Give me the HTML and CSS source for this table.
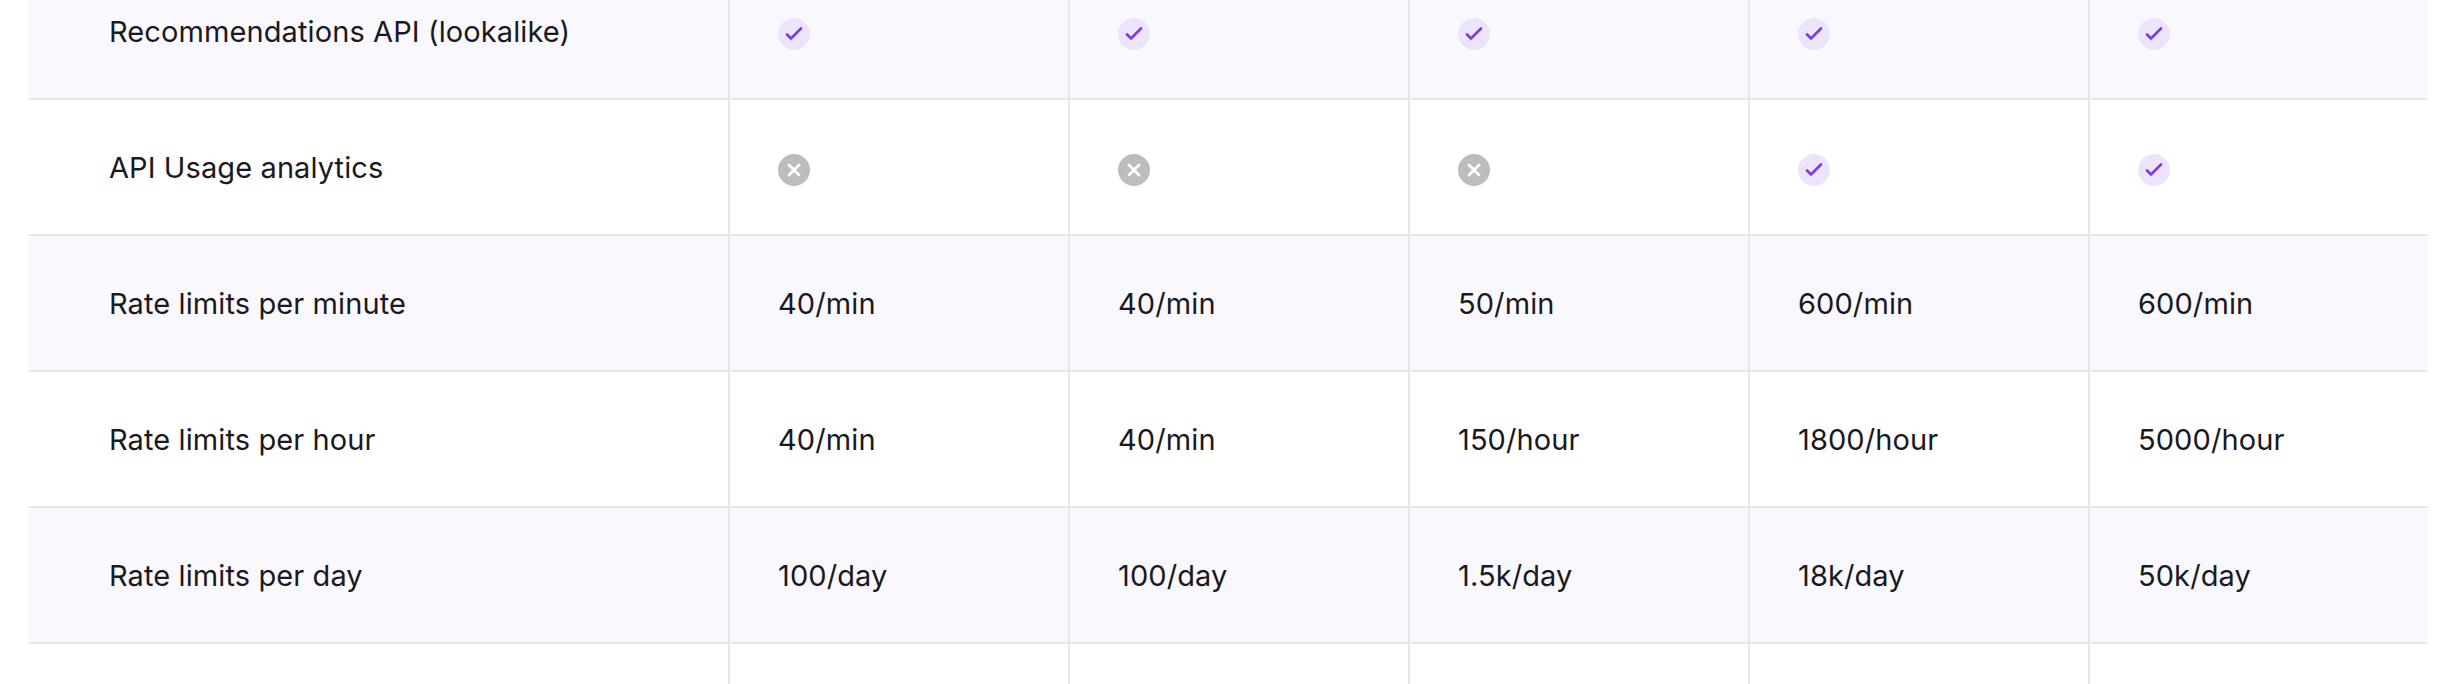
FILE: index.html
```html
<!DOCTYPE html>
<html lang="en">
<head>
<meta charset="utf-8">
<title>Plan comparison</title>
<link rel="stylesheet" href="styles.css">
</head>
<body>
<div class="table">
  <div class="row tint">
    <div class="cell label">Recommendations API (lookalike)</div>
    <div class="cell"><span class="icon yes"><svg viewBox="0 0 32 32"><path d="M9 16.5 L13 20.5 L23 10.5"/></svg></span></div>
    <div class="cell"><span class="icon yes"><svg viewBox="0 0 32 32"><path d="M9 16.5 L13 20.5 L23 10.5"/></svg></span></div>
    <div class="cell"><span class="icon yes"><svg viewBox="0 0 32 32"><path d="M9 16.5 L13 20.5 L23 10.5"/></svg></span></div>
    <div class="cell"><span class="icon yes"><svg viewBox="0 0 32 32"><path d="M9 16.5 L13 20.5 L23 10.5"/></svg></span></div>
    <div class="cell"><span class="icon yes"><svg viewBox="0 0 32 32"><path d="M9 16.5 L13 20.5 L23 10.5"/></svg></span></div>
  </div>
  <div class="row">
    <div class="cell label">API Usage analytics</div>
    <div class="cell"><span class="icon no"><svg viewBox="0 0 32 32"><path d="M11 11 L21 21 M21 11 L11 21"/></svg></span></div>
    <div class="cell"><span class="icon no"><svg viewBox="0 0 32 32"><path d="M11 11 L21 21 M21 11 L11 21"/></svg></span></div>
    <div class="cell"><span class="icon no"><svg viewBox="0 0 32 32"><path d="M11 11 L21 21 M21 11 L11 21"/></svg></span></div>
    <div class="cell"><span class="icon yes"><svg viewBox="0 0 32 32"><path d="M9 16.5 L13 20.5 L23 10.5"/></svg></span></div>
    <div class="cell"><span class="icon yes"><svg viewBox="0 0 32 32"><path d="M9 16.5 L13 20.5 L23 10.5"/></svg></span></div>
  </div>
  <div class="row tint">
    <div class="cell label">Rate limits per minute</div>
    <div class="cell">40/min</div>
    <div class="cell">40/min</div>
    <div class="cell">50/min</div>
    <div class="cell">600/min</div>
    <div class="cell">600/min</div>
  </div>
  <div class="row">
    <div class="cell label">Rate limits per hour</div>
    <div class="cell">40/min</div>
    <div class="cell">40/min</div>
    <div class="cell">150/hour</div>
    <div class="cell">1800/hour</div>
    <div class="cell">5000/hour</div>
  </div>
  <div class="row tint">
    <div class="cell label">Rate limits per day</div>
    <div class="cell">100/day</div>
    <div class="cell">100/day</div>
    <div class="cell">1.5k/day</div>
    <div class="cell">18k/day</div>
    <div class="cell">50k/day</div>
  </div>
  <div class="row last">
    <div class="cell label"></div>
    <div class="cell"></div>
    <div class="cell"></div>
    <div class="cell"></div>
    <div class="cell"></div>
    <div class="cell"></div>
  </div>
</div>
</body>
</html>
```

FILE: styles.css
```css
html, body {
  margin: 0;
  padding: 0;
  background: #ffffff;
  height: 684px;
  overflow: hidden;
}

body {
  font-family: "Inter", "Liberation Sans", sans-serif;
  color: #1a1820;
}

.table {
  width: 2400px;
  margin: -36px 0 0 28px;
}

.row {
  display: grid;
  grid-template-columns: 700px repeat(5, 340px);
  height: 136px;
  border-bottom: 2px solid #e9e7ed;
  box-sizing: border-box;
  background: #ffffff;
}

.row.tint {
  background: #faf8ff;
}

.row.last {
  height: 40px;
  border-bottom: none;
}

.cell {
  display: flex;
  align-items: center;
  padding-left: 48px;
  border-left: 2px solid #e9e7ed;
  font-size: 29px;
  letter-spacing: 0.1px;
}

.cell.label {
  border-left: none;
  padding-left: 81px;
}

.icon {
  width: 32px;
  height: 32px;
  border-radius: 50%;
  display: flex;
  align-items: center;
  justify-content: center;
  margin-top: 6px;
}

.icon svg {
  width: 32px;
  height: 32px;
  fill: none;
  stroke-linecap: round;
  stroke-linejoin: round;
}

.icon.yes {
  background: #ece3fd;
}

.icon.yes svg {
  stroke: #7b3ae6;
  stroke-width: 2.6;
}

.icon.no {
  background: #bdbdbd;
}

.icon.no svg {
  stroke: #ffffff;
  stroke-width: 2.8;
}
```
